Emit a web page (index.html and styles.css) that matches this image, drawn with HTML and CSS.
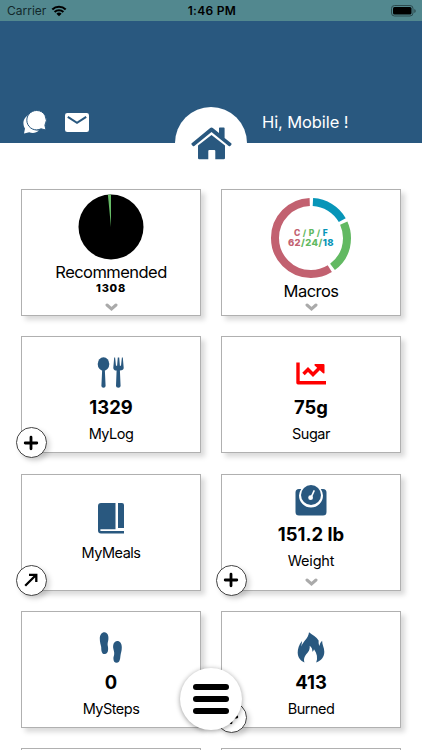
FILE: index.html
```html
<!DOCTYPE html>
<html lang="en">
<head>
<meta charset="utf-8">
<title>Dashboard</title>
<link rel="stylesheet" href="styles.css">
</head>
<body>
<div class="status">
  <span class="carrier">Carrier
    <svg width="16" height="12" viewBox="0 0 16 12"><path d="M1.3 4.5a9.6 9.6 0 0 1 13.4 0M3.6 7a6.3 6.3 0 0 1 8.8 0" fill="none" stroke="#000" stroke-width="2.1"/><path d="M8 11.3 5.4 8.7a3.8 3.8 0 0 1 5.2 0z"/></svg>
  </span>
  <span class="clock">1:46 PM</span>
  <svg class="battery" width="26" height="12" viewBox="0 0 26 12"><rect x=".5" y=".5" width="21.5" height="10.5" rx="3" fill="none" stroke="#2c4a4e"/><rect x="2" y="2" width="18.5" height="7.5" rx="1.5"/><path d="M23.3 4v4q1.4-.6 1.400-2t-1.400-2z" fill="#2c4a4e"/></svg>
</div>
<header class="header">
  <div class="tools">
    <svg width="24" height="24" viewBox="0 0 24 24"><path d="M6.3 4.500C2.500 6.600 0 10 .5 14c.1 1.700.7 3.200 1.500 4.400L1 23.500l5.200-1.200c3.300 1.400 7.200.8 9.800-1.700C9 21 3 15 4.500 8z" fill="#fff"/><path d="M13.700.5a9.700 9.700 0 1 0 4.300 18.300l5 1.200-1.100-4.800A9.700 9.700 0 0 0 13.700.5z" fill="#fff" stroke="#29587f" stroke-width="1"/></svg>
    <svg width="24" height="19" viewBox="0 0 24 19"><rect width="24" height="19" rx="2.300" fill="#fff"/><path d="m2.800 3.800 9.200 6 9.200-6" fill="none" stroke="#29587f" stroke-width="2"/></svg>
  </div>
  <div class="home">
    <svg width="41" height="33" viewBox="0 0 41 33"><path d="M7 18.500 20.500 8 34 18.500V31q0 1.300-1.300 1.300H24.300V24q0-1-1-1h-5q-1 0-1 1v8.300H8.300Q7 32.300 7 31z"/><path d="m.7 16.200 18.200-15q1.600-1.300 3.200 0l5.900 4.900V1.200q0-.8.800-.8h4q.8 0 .8.800v9.700l6.600 5.400q.8.700.1 1.500l-1 1.100q-.8.800-1.600.1L20.500 5 3.300 19q-.8.700-1.500-.1l-1.200-1.300q-.6-.8.100-1.400z"/></svg>
  </div>
  <div class="greeting">Hi, Mobile !</div>
</header>
<main class="grid">
  <section class="card chart">
    <svg width="66" height="66" viewBox="0 0 66 66"><circle cx="33" cy="33" r="32.500"/><path d="M33 33 29.900.65A32.500 32.500 0 0 1 33 .5z" fill="#67bb67"/></svg>
    <div class="title recommended">Recommended</div>
    <div class="small">1308</div>
    <svg class="chev" width="13" height="8" viewBox="0 0 13 8"><path d="m2 2 4.500 3.900L11 2"/></svg>
  </section>
  <section class="card chart macros">
    <div class="donut">
      <svg width="80" height="80" viewBox="0 0 80 80"><g transform="rotate(-89.500 40 40)" fill="none" stroke-width="8"><circle cx="40" cy="40" r="36" pathLength="104" stroke="#0795b8" stroke-dasharray="16.500 87.500" stroke-dashoffset="-.75"/><circle cx="40" cy="40" r="36" pathLength="104" stroke="#62b962" stroke-dasharray="22.500 81.500" stroke-dashoffset="-18.750"/><circle cx="40" cy="40" r="36" pathLength="104" stroke="#c26170" stroke-dasharray="60.500 43.500" stroke-dashoffset="-42.750"/></g></svg>
      <div class="ratio"><div class="names"><span class="c">C</span><span class="p"> / P / </span><span class="f">F</span></div><div class="values"><span class="c">62</span><span class="p">/24/</span><span class="f">18</span></div></div>
    </div>
    <div class="title">Macros</div>
    <svg class="chev" width="13" height="8" viewBox="0 0 13 8"><path d="m2 2 4.500 3.900L11 2"/></svg>
  </section>

  <section class="card">
    <svg class="icon" width="28" height="31" viewBox="0 0 28 31"><ellipse cx="6.500" cy="7" rx="5.800" ry="6.800"/><path d="M5.200 12h2.600l.8 17q-.1 1.700-2.100 1.700T4.400 29zM17.200.5l-.9 10.200q0 2.700 3.300 2.900L19 29q.1 1.700 2.300 1.700t2.300-1.700l-.7-15.400q3.800-.3 3.800-2.900L25.800.5h-.9l-.9 8.200h-1.100L22.200.5h-1.400l-.7 8.200H19L18.100.5z"/></svg>
    <div class="number">1329</div>
    <div class="label">MyLog</div>
    <div class="badge"><svg width="16" height="16" viewBox="0 0 16 16"><path d="M8 2.200v11.600M2.200 8h11.600" stroke-linecap="round"/></svg></div>
  </section>
  <section class="card">
    <svg class="icon red" width="32" height="31" viewBox="0 0 32 31"><path d="M3 5.500v20.300h28" fill="none" stroke="red" stroke-width="3.400" stroke-linejoin="round"/><path d="m8.500 17 4.500-4.500 5 5 7.500-7.500" fill="none" stroke="red" stroke-width="3.500"/><path d="M20 7h8.500q1 0 1 1v8q-.8 1-1.700.1l-8.200-7.500q-.7-1 .4-1.600z" fill="red"/></svg>
    <div class="number">75g</div>
    <div class="label">Sugar</div>
  </section>

  <section class="card meals">
    <svg class="icon" width="28" height="31" viewBox="0 0 28 31"><path d="M4 0h14.500v26.300H3.400v1.600H27v2.600H4q-3 0-3-3V3q0-3 3-3zM21 0h4q2 0 2 2v23H21z"/></svg>
    <div class="label">MyMeals</div>
    <div class="badge arrow"><svg width="16" height="16" viewBox="0 0 16 16"><path d="M2.200 13.800 13 3M6 2.800h7.300V10"/></svg></div>
  </section>
  <section class="card weight">
    <svg class="icon" width="32" height="31" viewBox="0 0 32 31"><path d="M4 4h2.200Q4 7.500 4 10.500a12 12 0 0 0 24 0Q28 7.500 25.800 4H28q3.500 0 3.500 3.500V27q0 3.500-3.500 3.500H4Q.5 30.500.5 27V7.500Q.5 4 4 4z"/><circle cx="16" cy="10" r="10"/><path d="m16 12.500 3-6.500" stroke="#fff" stroke-width="1.700" stroke-linecap="round"/><circle cx="15.600" cy="12.700" r="2.400" fill="#fff"/></svg>
    <div class="number">151.2 lb</div>
    <div class="label">Weight</div>
    <svg class="chev" width="13" height="8" viewBox="0 0 13 8"><path d="m2 2 4.500 3.900L11 2"/></svg>
    <div class="badge"><svg width="16" height="16" viewBox="0 0 16 16"><path d="M8 2.200v11.600M2.200 8h11.600" stroke-linecap="round"/></svg></div>
  </section>

  <section class="card">
    <svg class="icon" width="24" height="31" viewBox="0 0 24 31"><path d="M5.500.3C8.500.3 10 4 9.300 8c-.4 2-.9 3.700-.6 5.500.3 1.600.5 2.600.4 4-.1 2.800-1.300 4.600-3.500 4.600-3.400 0-3.300-4.600-3.400-7.200C1.800 12.500.8 10.500.8 6.700.8 2.800 2.700.3 5.500.3z"/><path d="M18.200 9c2.900 0 4.600 2.600 4.600 6.400 0 3.800-1 5.600-1.300 8.200-.3 2.700-.4 7.200-3.800 7.200-2.200 0-3.300-1.700-3.300-4.600 0-1.600.7-2.600.8-4.300.2-1.700-.5-3.300-.9-5.300C13.600 12.700 15.100 9 18.200 9z"/></svg>
    <div class="number">0</div>
    <div class="label">MySteps</div>
  </section>
  <section class="card">
    <svg class="icon" width="28" height="31" viewBox="0 0 28 31"><path d="M12 .3c-.5 6-5.500 8.500-7.800 14.200C4.500 12.500 4.900 11.500 5 9 2 12.500.7 17 .7 20.500c0 5 3 8.500 6.800 10-1.500-4.500 1-7.500 3.600-10.500 1.300-1.700 1.800-3.600 1.600-6.200 2 1.300 2.800 3.500 2.700 6 .9-.6 1.300-1.400 1.600-2.600 3 4.300 4 8.800 2.200 13.300 5-1.800 8.100-5.500 8.100-10.800 0-4.100-2.200-7-2.200-11-1.600 1.500-2.300 3-2.600 5.200-.9-1.600-.9-3-.9-5.400C19.500 5 15.500 3 12 .3z"/></svg>
    <div class="number">413</div>
    <div class="label">Burned</div>
    <div class="badge"><svg width="16" height="16" viewBox="0 0 16 16"><path d="M8 2.200v11.600M2.200 8h11.600" stroke-linecap="round"/></svg></div>
  </section>
  <section class="card next"></section>
  <section class="card next"></section>
</main>
<div class="menu"><i></i><i></i><i></i></div>
</body>
</html>
```
FILE: styles.css
```css
* { box-sizing: border-box; }
html, body { height: 100%; overflow: hidden; }
body {
  margin: 0;
  background: #fff;
  color: #000;
  font-family: Inter, "Liberation Sans", sans-serif;
}
svg { display: block; flex: none; }
.status {
  height: 21px;
  padding: 0 5px 0 7px;
  background: #52888f;
  display: grid;
  grid-template-columns: 1fr auto 1fr;
  align-items: center;
  font-size: 12px;
}
.carrier { display: flex; align-items: center; gap: 5px; color: #12282b; }
.clock { font-weight: 600; letter-spacing: .3px; }
.battery { justify-self: end; }
.header {
  height: 121.500px;
  background: linear-gradient(#29587f, #29587f);
  display: grid;
  grid-template-columns: 175px 72px 1fr;
  align-items: end;
}
.tools { display: flex; align-items: center; gap: 18px; padding: 0 0 8.500px 23px; }
.home {
  width: 72px;
  height: 72px;
  margin-bottom: -36px;
  border-radius: 50%;
  background: #fff;
  display: flex;
  justify-content: center;
  padding-top: 20px;
  fill: #29587f;
}
.greeting {
  padding: 0 0 10px 15px;
  color: #fff;
  font-size: 16.500px;
  line-height: 22px;
  letter-spacing: -.1px;
}
.grid {
  display: grid;
  grid-template-columns: 180px 180px;
  grid-template-rows: 127px repeat(3, 117px) 2px;
  gap: 20.400px 20px;
  height: 607.500px;
  overflow: hidden;
  padding: 46.300px 0 0 21px;
}
.card {
  position: relative;
  display: flex;
  flex-direction: column;
  align-items: center;
  padding-top: 20px;
  background: #fff;
  border: 1px solid #b0b0b0;
  box-shadow: 4px 4px 5px rgba(0, 0, 0, .15);
}
.next { height: 2px; padding: 0; border-bottom: 0; box-shadow: none; }
.icon { fill: #29587f; }
.number { margin-top: 7px; font-size: 18.400px; line-height: 24px; font-weight: 700; }
.label { margin-top: 4px; font-size: 14.500px; line-height: 22px; letter-spacing: -.5px; }
.chart { padding-top: 4px; }
.title { font-size: 16.500px; line-height: 22px; letter-spacing: -.55px; }
.recommended { margin-top: 1px; }
.small { margin-top: -1px; font-size: 11px; line-height: 12px; font-weight: 800; letter-spacing: .7px; }
.chev { fill: none; stroke: #aaa; stroke-width: 3; stroke-linecap: round; }
.chart .chev { margin-top: 9px; }
.macros { padding-top: 8px; }
.macros .title { margin-top: 2px; }
.macros .chev { margin-top: 1px; }
.donut { display: grid; place-items: center; }
.donut > * { grid-area: 1 / 1; }
.ratio { text-align: center; font-weight: 800; line-height: 10px; }
.names { font-size: 8.500px; letter-spacing: .35px; white-space: pre; }
.values { font-size: 9.500px; letter-spacing: .4px; }
.c { color: #c26170; }
.p { color: #62b962; }
.f { color: #0795b8; }
.meals { padding-top: 28px; }
.meals .label { margin-top: 8px; }
.weight { padding-top: 10px; }
.weight .number { margin-top: 6px; }
.weight .label { letter-spacing: -.2px; }
.weight .chev { margin-top: 6px; }
.badge {
  position: absolute;
  left: -6.500px;
  bottom: -6px;
  width: 31px;
  height: 31px;
  border: 1px solid #444;
  border-radius: 50%;
  background: #fff;
  box-shadow: 3px 3px 5px rgba(0, 0, 0, .15);
  display: grid;
  place-items: center;
}
.badge path { fill: none; stroke: #000; stroke-width: 2.800; }
.arrow path { stroke-width: 2.300; }
.menu {
  position: absolute;
  left: 180px;
  top: 668px;
  width: 62px;
  height: 62px;
  border-radius: 50%;
  background: #fff;
  box-shadow: 0 1px 5px rgba(0, 0, 0, .4);
  display: flex;
  flex-direction: column;
  align-items: center;
  justify-content: center;
  gap: 6.300px;
}
.menu i { width: 36px; height: 6px; border-radius: 3px; background: #000; }
```
